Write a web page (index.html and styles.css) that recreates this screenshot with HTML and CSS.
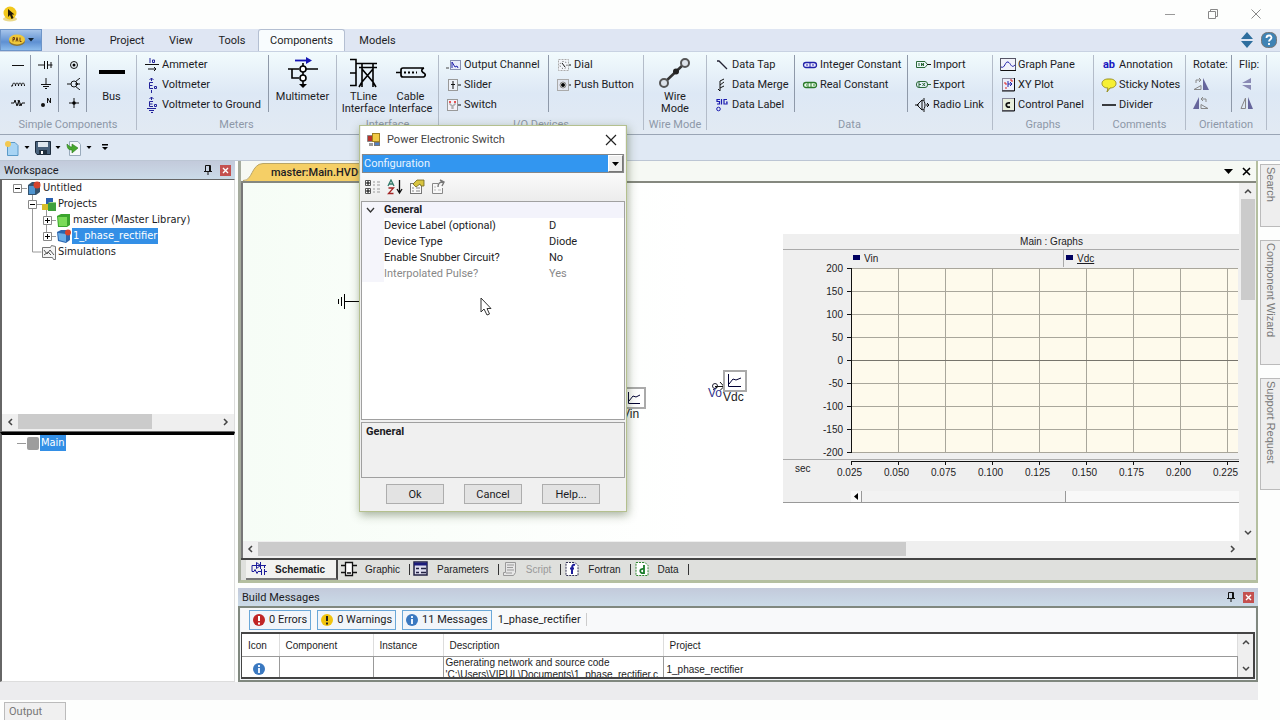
FILE: index.html
```html
<!DOCTYPE html>
<html lang="en">

	<head>
		<meta charset="UTF-8">
		<title>1_phase_rectifier</title>
		<link rel="stylesheet" href="styles.css">
	</head>

	<body>
		<header class="titlebar">
			<svg class="app-icon" width="16" height="16" viewBox="0 0 16 16"><ellipse cx="8" cy="13" rx="7" ry="2.5" fill="#ead98a"/><circle cx="8" cy="7" r="6.5" fill="#f2c81c"/><path d="M6 3v8l2-2 1.500 4 2-1-1.500-3.500h2.500z" fill="#221a08"/></svg>
			<div class="win-buttons">
				<button aria-label="Minimize"><svg width="12" height="12" viewBox="0 0 12 12"><path d="M1 6.500h10" stroke="#999"/></svg></button>
				<button aria-label="Restore"><svg width="12" height="12" viewBox="0 0 12 12"><path d="M1.500 3.500h7v7h-7zM3.500 3V1.500h7v7H9" fill="none" stroke="#888"/></svg></button>
				<button aria-label="Close"><svg width="12" height="12" viewBox="0 0 12 12"><path d="M1.500 1.500l9 9M10.500 1.500l-9 9" stroke="#888"/></svg></button>
			</div>
		</header>

		<nav class="tabs">
			<button class="app-menu" aria-label="Application menu"><svg width="34" height="16" viewBox="0 0 34 16"><ellipse cx="11" cy="9" rx="8" ry="5" fill="#8d7430"/><ellipse cx="11" cy="7.500" rx="8" ry="5" fill="#efc83a"/><path d="M7 9.500v-4h1.500v2H7M10 9.500l1-4 1 4M14 5.500v4h1.500" fill="none" stroke="#6b3c10"/><path d="M22 6h6l-3 3.500z" fill="#123"/></svg></button>
			<button class="tab tab-home">Home</button>
			<button class="tab tab-project">Project</button>
			<button class="tab tab-view">View</button>
			<button class="tab tab-tools">Tools</button>
			<button class="tab tab-components active">Components</button>
			<button class="tab tab-models">Models</button>
			<div class="tab-tools-right">
				<svg width="14" height="16" viewBox="0 0 14 16"><path d="M7 0l6 7H1zM7 16l6-7H1z" fill="#2e6e9e"/></svg>
				<svg width="16" height="16" viewBox="0 0 16 16"><rect x=".5" y=".5" width="15" height="15" rx="6" fill="#3f83b4" stroke="#777"/><path d="M5.500 6c0-3.500 5-3 5-.5 0 2-2.500 2-2.500 4M8 11v2" fill="none" stroke="#fff" stroke-width="1.800"/></svg>
			</div>
		</nav>

		<section class="ribbon">
			<div class="group g-simple">
				<div class="group-body">
					<div class="icon-col">
						<button aria-label="Wire"><svg width="16" height="12" viewBox="0 0 16 12"><path d="M2 6.500h12" stroke="#111"/></svg></button>
						<button aria-label="Inductor"><svg width="16" height="12" viewBox="0 0 16 12"><path d="M1 8h1.500c0-4 3-4 3 0 0-4 3-4 3 0 0-4 3-4 3 0 0-4 3-4 3 0" fill="none" stroke="#111"/></svg></button>
						<button aria-label="Resistor"><svg width="16" height="12" viewBox="0 0 16 12"><path d="M1 6h3l1-3 2 6 2-6 2 6 1-3h3M8 3l1.500 6" fill="none" stroke="#111"/></svg></button>
					</div>
					<div class="icon-col">
						<button aria-label="Capacitor"><svg width="16" height="12" viewBox="0 0 16 12"><path d="M0 6h6M9.500 6h5M6.500 2v8M9.500 2v8M13 3v6" stroke="#111"/></svg></button>
						<button aria-label="Ground"><svg width="16" height="12" viewBox="0 0 16 12"><path d="M8 0v6M3 6.500h10M5 8.500h6M7 10.500h2" stroke="#111"/></svg></button>
						<button aria-label="Node label"><svg width="16" height="12" viewBox="0 0 16 12"><circle cx="5" cy="8" r="2" fill="#111"/><path d="M9.500 6V1l3 5V1" fill="none" stroke="#111"/></svg></button>
					</div>
					<div class="icon-col">
						<button aria-label="Node"><svg width="16" height="12" viewBox="0 0 16 12"><circle cx="8" cy="6" r="3.500" fill="none" stroke="#111"/><circle cx="8" cy="6" r="1.500"/></svg></button>
						<button aria-label="Breakout"><svg width="16" height="12" viewBox="0 0 16 12"><path d="M1 6h4M9 4l5-4M9 6h5M9 8l5 4M10 5l2 1-2 1" stroke="#111" fill="none"/><circle cx="8" cy="6" r="3" fill="none" stroke="#111"/></svg></button>
						<button aria-label="Pin"><svg width="16" height="12" viewBox="0 0 16 12"><path d="M3 6h10M8 1v10" stroke="#111"/><circle cx="8" cy="6" r="1.800"/></svg></button>
					</div>
					<button class="big big-bus"><svg width="28" height="32" viewBox="0 0 28 32"><path d="M1 15h26" stroke="#000" stroke-width="4"/></svg><span>Bus</span></button>
				</div>
				<div class="group-label">Simple Components</div>
			</div>

			<div class="group g-meters">
				<div class="group-body">
					<div class="list">
						<button class="item"><svg width="16" height="16" viewBox="0 0 16 16"><path d="M1 7.500h14" stroke="#111"/><path d="M4 12h8M10 10l2 2-2 2" fill="none" stroke="#111"/><path d="M6 1v5M8.500 3h2v2.500h-2z" fill="none" stroke="#22229a"/></svg>Ammeter</button>
						<button class="item"><svg width="16" height="16" viewBox="0 0 16 16"><path d="M7.500 1v3M5.500 3l2-2 2 2M7.500 13v3" fill="none" stroke="#22229a"/><path d="M9 5.500H5.500v6H9M5.500 8.500h3M10.500 9.500h2v2h-2z" fill="none" stroke="#22229a"/></svg>Voltmeter</button>
						<button class="item"><svg width="16" height="16" viewBox="0 0 16 16"><path d="M7.500 0v3M5.500 2l2-2 2 2M9 4.500H5.500v5H9M5.500 7h3M10.500 7.500h2v2h-2z" fill="none" stroke="#22229a"/><path d="M3 11.500h9M5 13.500h5M7 15.500h2" stroke="#22229a"/></svg>Voltmeter to Ground</button>
					</div>
					<button class="big big-multi"><svg width="32" height="32" viewBox="0 0 32 32"><path d="M8 3.500h12" stroke="#1414b4" stroke-width="1.800"/><path d="M19 0l6 3.500L19 7z" fill="#1414b4"/><path d="M1 12h11M19 12h12M5 12v9h7M16 6v3M16 15v3M16 24v5" fill="none" stroke="#000" stroke-width="1.600"/><circle cx="16" cy="12" r="3" fill="#fff" stroke="#000" stroke-width="1.600"/><circle cx="16" cy="21" r="3" fill="#fff" stroke="#000" stroke-width="1.600"/><path d="M12 27h8l-4 4z"/></svg><span>Multimeter</span></button>
				</div>
				<div class="group-label">Meters</div>
			</div>

			<div class="group g-interface">
				<div class="group-body">
					<button class="big big-tline"><svg width="32" height="32" viewBox="0 0 32 32"><path d="M2 2.500h6v26H2M2 16h6M8 6.500h21M11 10.500h18M14 6v24M25 6v24M14 12l11 13M25 12L14 25M14 25l-3 5M25 25l3 5" fill="none" stroke="#000" stroke-width="1.600"/></svg><span>TLine Interface</span></button>
					<button class="big big-cable"><svg width="32" height="32" viewBox="0 0 32 32"><path d="M1 15.500h5M29 11H8q-2 0-2 2v5q0 2 2 2h21M29 11q-4 2-1 4.500 4 2 1 4.500" fill="none" stroke="#000" stroke-width="1.700"/><path d="M9 15.500h13" stroke="#000" stroke-width="2" stroke-dasharray="2 2"/></svg><span>Cable Interface</span></button>
				</div>
				<div class="group-label">Interface</div>
			</div>

			<div class="group g-io">
				<div class="group-body">
					<div class="list">
						<button class="item"><svg width="16" height="16" viewBox="0 0 16 16"><path d="M0 11h3M5.500 3v9.500h9" fill="none" stroke="#444"/><rect x="4.500" y="3.500" width="10" height="9" fill="#e8ecfa" stroke="#8890b0"/><path d="M6 11V5l3 5 2-1 1 2" fill="none" stroke="#2222aa"/></svg>Output Channel</button>
						<button class="item"><svg width="16" height="16" viewBox="0 0 16 16"><rect x="2.500" y="2.500" width="9" height="11" fill="#eef1f8" stroke="#999"/><path d="M7 4v8M5 7.500h4M12 8h3" stroke="#111"/></svg>Slider</button>
						<button class="item"><svg width="16" height="16" viewBox="0 0 16 16"><rect x="1.500" y="2.500" width="10" height="11" fill="#f4f2f8" stroke="#999"/><path d="M4 6v2h2v4M9 6v2H7v4" fill="none" stroke="#999"/><path d="M4 4v2M9 4v2" stroke="#d22" stroke-width="1.500"/><path d="M12 8h3" stroke="#111"/></svg>Switch</button>
					</div>
					<div class="list list-dial">
						<button class="item"><svg width="16" height="16" viewBox="0 0 16 16"><rect x="2.500" y="2.500" width="10" height="11" fill="#f3f5fa" stroke="#aaa" stroke-dasharray="2 1"/><circle cx="7.500" cy="8" r="3.500" fill="none" stroke="#444" stroke-dasharray="1 2"/><path d="M6 6l3 4M13 8h2" stroke="#111"/></svg>Dial</button>
						<button class="item"><svg width="16" height="16" viewBox="0 0 16 16"><rect x="1.500" y="2.500" width="11" height="11" fill="#e2e6ef" stroke="#aaa"/><circle cx="7" cy="8" r="3" fill="#fff" stroke="#888"/><circle cx="7" cy="8" r="2"/><path d="M13 8h2" stroke="#111"/></svg>Push Button</button>
					</div>
				</div>
				<div class="group-label">I/O Devices</div>
			</div>

			<div class="group g-wire">
				<div class="group-body">
					<button class="big"><svg width="32" height="32" viewBox="0 0 32 32"><path d="M6 25L26 6" stroke="#333" stroke-width="2.500"/><circle cx="5" cy="26" r="4" fill="#dde3ea" stroke="#555" stroke-width="2"/><circle cx="26" cy="6" r="4" fill="#dde3ea" stroke="#555" stroke-width="2"/><circle cx="17" cy="14.500" r="3" fill="#222"/></svg><span>Wire Mode</span></button>
				</div>
				<div class="group-label">Wire Mode</div>
			</div>

			<div class="group g-data">
				<div class="group-body">
					<div class="list">
						<button class="item"><svg width="16" height="16" viewBox="0 0 16 16"><path d="M3 4h2l8 8" fill="none" stroke="#223" stroke-width="1.300"/></svg>Data Tap</button>
						<button class="item"><svg width="16" height="16" viewBox="0 0 16 16"><path d="M10 2L6 4v10M6 8l4-3M6 11l4-2M6 14l-2-2" fill="none" stroke="#111"/></svg>Data Merge</button>
						<button class="item"><svg width="16" height="16" viewBox="0 0 16 16"><path d="M6 2.500H3v2h2.500v2.500H3M7.500 2v5.500M13 2.500h-3V7h3V5h-1" fill="none" stroke="#1c1cb0" stroke-width="1.200"/><circle cx="4.500" cy="12" r="1.800" fill="none" stroke="#1c1cb0"/></svg>Data Label</button>
					</div>
					<div class="list list-const">
						<button class="item"><svg width="16" height="16" viewBox="0 0 16 16"><rect x="1.500" y="5.500" width="13" height="5" rx="2.500" fill="#eef" stroke="#2222aa" stroke-width="1.300"/><path d="M8 6v4M4 8h2M10 8h2" stroke="#2222aa"/></svg>Integer Constant</button>
						<button class="item"><svg width="16" height="16" viewBox="0 0 16 16"><rect x="1.500" y="5.500" width="13" height="5" rx="2.500" fill="#efe" stroke="#2a7a2a" stroke-width="1.300"/><path d="M6 6v4M9 6v4M4 8h1M11 8h2" stroke="#2a7a2a"/></svg>Real Constant</button>
					</div>
					<div class="list list-import">
						<button class="item"><svg width="16" height="16" viewBox="0 0 16 16"><path d="M1.500 4.500H10l2.500 3-2.500 3H1.500zM4 6v3M6.500 9V6l2 3V6" fill="none" stroke="#2c6a38"/><path d="M12 7.500h4" stroke="#111"/></svg>Import</button>
						<button class="item"><svg width="16" height="16" viewBox="0 0 16 16"><rect x="1.500" y="4.500" width="11" height="6" rx="2.500" fill="none" stroke="#2c6a38"/><path d="M4 5v5M4 7.500h2M7.500 6l2.500 3M10 6L7.500 9M13 7.500h3" stroke="#2c6a38"/></svg>Export</button>
						<button class="item"><svg width="16" height="16" viewBox="0 0 16 16"><path d="M7 3L2 8l5 5zM7 3c4 0 4 10 0 10M0 8h4M11 8h3M12 6l2 2-2 2M9 1v3M9 12v3" fill="none" stroke="#111"/></svg>Radio Link</button>
					</div>
				</div>
				<div class="group-label">Data</div>
			</div>

			<div class="group g-graphs">
				<div class="group-body">
					<div class="list">
						<button class="item"><svg width="16" height="16" viewBox="0 0 16 16"><rect x=".5" y="1.500" width="15" height="12" fill="#f1f2fa" stroke="#556"/><path d="M1 10c4 2 4-6 7-5s3 7 7 3" fill="none" stroke="#2222aa"/><path d="M1 13.500h15" stroke="#111"/></svg>Graph Pane</button>
						<button class="item"><svg width="16" height="16" viewBox="0 0 16 16"><rect x="2.500" y="1.500" width="12" height="12" fill="#eceefa" stroke="#889"/><path d="M14.500 1v13H2" fill="none" stroke="#111"/><path d="M8 4v6M8 7h4M10 5l2 2-2 2" stroke="#2222aa" fill="none"/><path d="M4 6h2v2M10 3h2v2M6 10v2" fill="none" stroke="#d22"/></svg>XY Plot</button>
						<button class="item"><svg width="16" height="16" viewBox="0 0 16 16"><rect x="2.500" y="1.500" width="12" height="12" fill="#e8efdc" stroke="#889"/><path d="M14.500 1v13H2" fill="none" stroke="#111"/><path d="M10 6c-5-1-5 5 0 4" fill="none" stroke="#111" stroke-width="1.800"/></svg>Control Panel</button>
					</div>
				</div>
				<div class="group-label">Graphs</div>
			</div>

			<div class="group g-comments">
				<div class="group-body">
					<div class="list">
						<button class="item"><b class="ab">ab</b>Annotation</button>
						<button class="item"><svg width="16" height="16" viewBox="0 0 16 16"><path d="M7 11C-1 11-1 2 7 2h2c8 0 8 9 0 9l-3 4z" fill="#f6f032" stroke="#998f22"/></svg>Sticky Notes</button>
						<button class="item"><svg width="16" height="16" viewBox="0 0 16 16"><path d="M1 8h14" stroke="#000" stroke-width="1.500"/></svg>Divider</button>
					</div>
				</div>
				<div class="group-label">Comments</div>
			</div>

			<div class="group g-orient">
				<div class="group-body">
					<div class="list">
						<span class="caption">Rotate:</span>
						<button class="item" aria-label="Rotate right"><svg width="16" height="14" viewBox="0 0 16 14"><path d="M10 1v12h6z" fill="#66669c"/><path d="M8 12.500H1l7-4zM3 6V3h5M6 1l2 2-2 2" fill="none" stroke="#888"/></svg></button>
						<button class="item" aria-label="Rotate left"><svg width="16" height="14" viewBox="0 0 16 14"><path d="M6 1v12H0z" fill="#66669c"/><path d="M8 12.500h7l-7-4zM13 6V3H8M10 1L8 3l2 2" fill="none" stroke="#888"/></svg></button>
					</div>
					<div class="list list-flip">
						<span class="caption">Flip:</span>
						<button class="item" aria-label="Flip vertical"><svg width="16" height="14" viewBox="0 0 16 14"><path d="M3 6h9V1zM3 8h9v5z" fill="#8a8ab4"/></svg></button>
						<button class="item" aria-label="Flip horizontal"><svg width="16" height="14" viewBox="0 0 16 14"><path d="M6.500 2v10.500H2z" fill="none" stroke="#888"/><path d="M9 1v12h5z" fill="#66669c"/></svg></button>
					</div>
				</div>
				<div class="group-label">Orientation</div>
			</div>
		</section>

		<div class="quickbar">
			<button aria-label="New"><svg width="16" height="16" viewBox="0 0 16 16"><path d="M3.500 2.500H11l3 3v10H3.500z" fill="#a8d4f4" stroke="#5a9ac8"/><circle cx="4" cy="4" r="3" fill="#f3c850"/></svg></button>
			<svg class="caret" width="6" height="4" viewBox="0 0 6 4"><path d="M.5 0h5L3 3z"/></svg>
			<button aria-label="Save"><svg width="16" height="16" viewBox="0 0 16 16"><path d="M.5 1.500h15v13H2l-1.500-2z" fill="#48627c" stroke="#1d2c3c"/><path d="M3 2h10v5H3z" fill="#dfe8f0"/><path d="M4 10h8v5H4z" fill="#20303f"/><path d="M6 11h2v3H6z" fill="#fff"/></svg></button>
			<svg class="caret" width="6" height="4" viewBox="0 0 6 4"><path d="M.5 0h5L3 3z"/></svg>
			<button aria-label="Load"><svg width="16" height="16" viewBox="0 0 16 16"><path d="M3.500 1.500H12l2.500 3v11h-11z" fill="#f4f7fa" stroke="#9ab"/><path d="M1 4c0 5 2 6 5 6v3l6-5-6-4v3C4 7 3 6 1 4z" fill="#47a82e" stroke="#2b7a1c" stroke-width=".6"/></svg></button>
			<svg class="caret" width="6" height="4" viewBox="0 0 6 4"><path d="M.5 0h5L3 3z"/></svg>
			<svg class="more" width="6" height="7" viewBox="0 0 6 7"><path d="M0 0h6v1.500H0zM0 3h6L3 6z"/></svg>
		</div>

		<main class="work">
			<aside class="left">
				<div class="pane-title"><span>Workspace</span>
					<svg class="pin" width="8" height="10" viewBox="0 0 8 10"><path d="M1.500 6V.5h5V6M0 6.500h8M4 7v3M5.500 1v5" fill="none" stroke="#111"/></svg>
					<button class="red-x" aria-label="Close Workspace"><svg width="7" height="7" viewBox="0 0 7 7"><path d="M1 1l5 5M6 1L1 6" stroke="#fff" stroke-width="1.400"/></svg></button>
				</div>
				<div class="tree">
					<ul>
						<li class="lv0"><svg class="pm" width="9" height="9" viewBox="0 0 9 9"><path d="M.5.5h8v8h-8z" fill="#fff" stroke="#888"/><path d="M2 4.500h5" stroke="#000"/></svg><svg width="14" height="15" viewBox="0 0 14 15"><path d="M1 4l4-3h8v10l-4 3H1z" fill="#35536e"/><path d="M2 5h6v8H2z" fill="#4f94cf"/><circle cx="10" cy="4" r="3.500" fill="#d3432d"/></svg><span>Untitled</span></li>
						<li class="lv1"><svg class="pm" width="9" height="9" viewBox="0 0 9 9"><path d="M.5.5h8v8h-8z" fill="#fff" stroke="#888"/><path d="M2 4.500h5" stroke="#000"/></svg><svg width="14" height="15" viewBox="0 0 14 15"><path d="M4 1h7v6H4z" fill="#2a5fae"/><path d="M0 7h6v6H0z" fill="#d6be2b"/><path d="M6 6h8v8H6z" fill="#3fa03c"/><path d="M6 6l2-1h6v1z" fill="#9ad08a"/></svg><span>Projects</span></li>
						<li class="lv2"><svg class="pm" width="9" height="9" viewBox="0 0 9 9"><path d="M.5.5h8v8h-8z" fill="#fff" stroke="#888"/><path d="M2 4.500h5M4.500 2v5" stroke="#000"/></svg><svg width="14" height="15" viewBox="0 0 14 15"><path d="M0 3l4-2h9v11l-3 2H1z" fill="#3ba52d"/><path d="M1 4h9v9H2z" fill="#7bdb58"/></svg><span>master (Master Library)</span></li>
						<li class="lv2"><svg class="pm" width="9" height="9" viewBox="0 0 9 9"><path d="M.5.5h8v8h-8z" fill="#fff" stroke="#888"/><path d="M2 4.500h5M4.500 2v5" stroke="#000"/></svg><svg width="14" height="15" viewBox="0 0 14 15"><path d="M0 3l4-2h9v10l-4 3-8-2z" fill="#2a66b0"/><path d="M1 4l8 1v8l-7-2z" fill="#6aaee8"/><circle cx="11" cy="3.500" r="3" fill="#d3432d"/></svg><span class="sel">1_phase_rectifier</span></li>
						<li class="lv1 leaf"><svg width="14" height="15" viewBox="0 0 14 15"><path d="M.5 2.500h8l1-2 4 1v13h-2l-1-2h-10z" fill="#f4f4f4" stroke="#777"/><path d="M2 5l3 4 3-4 4 5M2 10l4-3 3 3" fill="none" stroke="#555"/></svg><span>Simulations</span></li>
					</ul>
					<svg class="tree-lines" width="60" height="80" viewBox="0 0 60 80"><path d="M22 8.500h5M32.500 14v58h9M37 24.500h5M46.500 30v26M51 40.500h5M51 56.500h5" fill="none" stroke="#999"/></svg>
					<div class="hscroll">
						<svg width="7" height="8" viewBox="0 0 7 8"><path d="M5 1L2 4l3 3" fill="none" stroke="#444" stroke-width="1.500"/></svg>
						<div class="track"><div class="thumb thumb-tree"></div></div>
						<svg width="7" height="8" viewBox="0 0 7 8"><path d="M2 1l3 3-3 3" fill="none" stroke="#444" stroke-width="1.500"/></svg>
					</div>
				</div>
				<div class="tree tree-main">
					<ul><li class="lv0"><i class="dash"></i><i class="grey-box"></i><span class="sel">Main</span></li></ul>
				</div>
			</aside>

			<div class="center">
				<section class="doc">
					<div class="doc-tabs">
						<svg class="tab-edge" width="20" height="18" viewBox="0 0 20 18"><path d="M0 18C10 18 8 1 20 .5V18z" fill="#f5cf66"/><path d="M0 17.500C10 18 8 1 20 .5" fill="none" stroke="#b9a566"/></svg>
						<button class="doc-tab">master:Main.HVDC</button>
						<div class="doc-actions">
							<svg width="9" height="5" viewBox="0 0 9 5"><path d="M0 0h9L4.500 5z"/></svg>
							<svg width="9" height="9" viewBox="0 0 9 9"><path d="M1 1l7 7M8 1L1 8" stroke="#000" stroke-width="1.600"/></svg>
						</div>
					</div>
					<div class="view">
						<div class="canvas">
							<svg class="node gnd" width="24" height="18" viewBox="0 0 24 18"><path d="M7 9.500h17M7.500 2v15M4.500 5v9M1.500 7v5" stroke="#000"/></svg>
							<div class="node vin">
								<svg width="24" height="22" viewBox="0 0 24 22"><rect x="1" y="1" width="22" height="20" fill="#fff" stroke="#aaa" stroke-width="2"/><path d="M6.500 5v11.500H18M7 14l4-5 3 1 4-2" fill="none" stroke="#003"/></svg>
								<span>Vin</span>
							</div>
							<svg class="node arrow" width="15" height="12" viewBox="0 0 15 12"><circle cx="5" cy="6" r="2.500" fill="none" stroke="#223"/><path d="M3 10l4-3M5 6.500h9M10 2l4 4.500-4 4" fill="none" stroke="#111"/></svg>
							<span class="node vo">Vo</span>
							<div class="node vdc">
								<svg width="24" height="22" viewBox="0 0 24 22"><rect x="1" y="1" width="22" height="20" fill="#fff" stroke="#aaa" stroke-width="2"/><path d="M5.500 4v12.500H18M6 14l4-5 3 1 5-2" fill="none" stroke="#003"/></svg>
								<span>Vdc</span>
							</div>

							<div class="node graph">
								<div class="graph-title">Main : Graphs</div>
								<div class="graph-legend"><span><i></i>Vin</span><span><i></i><u>Vdc</u></span></div>
								<div class="graph-plot">
									<div class="y-axis"><span>200</span><span>150</span><span>100</span><span>50</span><span>0</span><span>-50</span><span>-100</span><span>-150</span><span>-200</span></div>
									<svg width="391" height="188" viewBox="0 0 391 188">
										<path d="M4 1h387v184H4z" fill="#fefaec"/>
										<path d="M51.500 1v184M98.500 1v184M145.500 1v184M192.500 1v184M239.500 1v184M286.500 1v184M333.500 1v184M380.500 1v184M4 1.500h387M4 24.500h387M4 47.500h387M4 70.500h387M4 116.500h387M4 139.500h387M4 162.500h387M4 185.500h387" stroke="#a9a69b"/>
										<path d="M4 93.500h387" stroke="#77746c"/>
										<path d="M4.500 1v185M0 1.500h4M0 24.500h4M0 47.500h4M0 70.500h4M0 93.500h4M0 116.500h4M0 139.500h4M0 162.500h4M0 185.500h4" stroke="#111"/>
									</svg>
								</div>
								<div class="x-axis">
									<span class="unit">sec</span>
									<div class="x-labels"><span>0.025</span><span>0.050</span><span>0.075</span><span>0.100</span><span>0.125</span><span>0.150</span><span>0.175</span><span>0.200</span><span>0.225</span></div>
								</div>
								<div class="graph-scroll"><svg width="10" height="9" viewBox="0 0 10 9"><path d="M7 1v7L3 4.500z"/></svg><div class="graph-thumb"></div></div>
							</div>
						</div>
						<div class="vscroll">
							<svg width="8" height="7" viewBox="0 0 8 7"><path d="M1 5l3-3 3 3" fill="none" stroke="#444" stroke-width="1.500"/></svg>
							<div class="track"><div class="thumb thumb-view"></div></div>
							<svg width="8" height="7" viewBox="0 0 8 7"><path d="M1 2l3 3 3-3" fill="none" stroke="#444" stroke-width="1.500"/></svg>
						</div>
					</div>
					<div class="hscroll hscroll-doc">
						<svg width="7" height="8" viewBox="0 0 7 8"><path d="M5 1L2 4l3 3" fill="none" stroke="#444" stroke-width="1.500"/></svg>
						<div class="track"><div class="thumb thumb-doc"></div></div>
						<svg width="7" height="8" viewBox="0 0 7 8"><path d="M2 1l3 3-3 3" fill="none" stroke="#444" stroke-width="1.500"/></svg>
					</div>
					<div class="sheet-tabs">
						<button class="sheet sheet-on"><svg width="16" height="16" viewBox="0 0 16 16"><path d="M4 4.500H1v6h2l1-2 2 4 1-2h3M4 4.500h11M5.500 1.500v6l4-3zM9.500 1v7M10.500 8v6M13.500 8v6M13 10.500h3M13.500 4v3" fill="none" stroke="#1c1c9a"/></svg>Schematic</button>
						<button class="sheet"><svg width="16" height="16" viewBox="0 0 16 16"><path d="M4.500 1.500h7v13h-7zM0 4.500h4M0 11.500h4M12 4.500h4M12 11.500h4M6 12h4" fill="#fff" stroke="#111" stroke-width="1.300"/></svg>Graphic</button>
						<button class="sheet"><svg width="16" height="16" viewBox="0 0 16 16"><rect x="1" y="1" width="13" height="13" fill="#dde" stroke="#224" stroke-width="1.500"/><path d="M1 3h13" stroke="#1c1c7a" stroke-width="3"/><path d="M3 7.500h3M8 7.500h5M3 11.500h3M8 11.500h5" stroke="#224" stroke-width="1.500"/></svg>Parameters</button>
						<button class="sheet sheet-off" disabled><svg width="16" height="16" viewBox="0 0 16 16"><path d="M3.500 1.500h10v10l-2 3h-10v-3h2z" fill="#e6e6e6" stroke="#999"/><path d="M5 4h7M5 6.500h6M5 9h7M4 12h6" stroke="#999"/></svg>Script</button>
						<button class="sheet"><svg width="16" height="16" viewBox="0 0 16 16"><path d="M2 1.500h9l3 3v10H2z" fill="#fff" stroke="#335" stroke-dasharray="2 1"/><path d="M11 4c-3-1-3 1-3 9M6 7.500h4" fill="none" stroke="#1c1c9a" stroke-width="2"/></svg>Fortran</button>
						<button class="sheet"><svg width="16" height="16" viewBox="0 0 16 16"><path d="M2 1.500h9l3 3v10H2z" fill="#fff" stroke="#383" stroke-dasharray="2 1"/><path d="M10 4v9M10 8c-5-1-5 5 0 4" fill="none" stroke="#187a28" stroke-width="1.800"/></svg>Data</button>
					</div>
				</section>

				<section class="messages">
					<div class="pane-title"><span>Build Messages</span>
						<svg class="pin" width="8" height="10" viewBox="0 0 8 10"><path d="M1.500 6V.5h5V6M0 6.500h8M4 7v3M5.500 1v5" fill="none" stroke="#111"/></svg>
						<button class="red-x" aria-label="Close Build Messages"><svg width="7" height="7" viewBox="0 0 7 7"><path d="M1 1l5 5M6 1L1 6" stroke="#fff" stroke-width="1.400"/></svg></button>
					</div>
					<div class="msg-box">
						<div class="msg-bar">
							<button><svg width="14" height="14" viewBox="0 0 14 14"><circle cx="7" cy="7" r="6" fill="#c02626"/><path d="M7 3v5M7 9.500v2" stroke="#fff" stroke-width="2"/></svg>0 Errors</button>
							<button><svg width="14" height="14" viewBox="0 0 14 14"><circle cx="7" cy="7" r="6" fill="#f1c40f"/><path d="M7 3v5M7 9.500v2" stroke="#222" stroke-width="2"/></svg>0 Warnings</button>
							<button><svg width="14" height="14" viewBox="0 0 14 14"><circle cx="7" cy="7" r="6" fill="#3a78c0"/><path d="M7 6v5M7 3v2" stroke="#e8f2ff" stroke-width="2"/></svg>11 Messages</button>
							<span>1_phase_rectifier</span>
						</div>
						<div class="msg-table">
							<table>
								<thead><tr><th class="c-icon">Icon</th><th class="c-comp">Component</th><th class="c-inst">Instance</th><th class="c-desc">Description</th><th>Project</th></tr></thead>
								<tbody><tr><td class="c-icon"><svg width="14" height="14" viewBox="0 0 14 14"><circle cx="7" cy="7" r="6" fill="#3a78c0"/><path d="M7 6v5M7 3v2" stroke="#e8f2ff" stroke-width="2"/></svg></td><td></td><td></td><td class="desc">Generating network and source code<br>'C:\Users\VIPUL\Documents\1_phase_rectifier.c</td><td>1_phase_rectifier</td></tr></tbody>
							</table>
							<div class="vscroll vscroll-msg">
								<svg width="8" height="7" viewBox="0 0 8 7"><path d="M1 5l3-3 3 3" fill="none" stroke="#444" stroke-width="1.500"/></svg>
								<svg width="8" height="7" viewBox="0 0 8 7"><path d="M1 2l3 3 3-3" fill="none" stroke="#444" stroke-width="1.500"/></svg>
							</div>
						</div>
					</div>
				</section>
			</div>

			<aside class="right">
				<button class="side-search">Search</button>
				<button class="side-wizard">Component Wizard</button>
				<button class="side-support">Support Request</button>
			</aside>
		</main>

		<div class="status"></div>
		<footer class="bottom"><button>Output</button></footer>

		<div class="dialog" role="dialog" aria-label="Power Electronic Switch">
			<div class="dlg-title">
				<svg width="14" height="14" viewBox="0 0 14 14"><path d="M.5 2.500h5v6h-5z" fill="#b8322c" stroke="#888"/><rect x="5.500" y=".5" width="7" height="8" fill="#f1c944" stroke="#a08020"/><path d="M2 10h4v3H2z" fill="#999"/><rect x="7.500" y="9.500" width="5" height="3" fill="#4f7ec4" stroke="#777"/></svg>
				<span>Power Electronic Switch</span>
				<button aria-label="Close"><svg width="12" height="12" viewBox="0 0 12 12"><path d="M1 1l10 10M11 1L1 11" stroke="#222" stroke-width="1.200"/></svg></button>
			</div>
			<div class="combo">
				<select aria-label="Page"><option>Configuration</option></select>
				<span class="combo-arrow"><svg width="7" height="4" viewBox="0 0 7 4"><path d="M0 0h7L3.500 4z"/></svg></span>
			</div>
			<div class="dlg-tools">
				<button aria-label="Categorized"><svg width="16" height="16" viewBox="0 0 16 16"><path d="M.5 1.500h5v5h-5zM.5 9.500h5v5h-5z" fill="#fff" stroke="#555"/><path d="M1 4h4M3 2v4M1 12h4M3 10v4" stroke="#000"/><path d="M8 3h2M12 3h3M8 6h2M12 6h3M8 10h2M12 10h3M8 13h2M12 13h3" stroke="#999"/></svg></button>
				<button aria-label="Alphabetical"><svg width="16" height="16" viewBox="0 0 16 16"><path d="M1 7l3-6 3 6M2 5h4" fill="none" stroke="#337a6a" stroke-width="1.300"/><path d="M1.500 9h5l-5 5.500h5" fill="none" stroke="#a32626" stroke-width="1.300"/><path d="M12.500 1v12M10 10l2.500 4 2.500-4" fill="none" stroke="#111" stroke-width="1.300"/></svg></button>
				<button aria-label="Properties"><svg width="16" height="16" viewBox="0 0 16 16"><rect x="1.500" y="4.500" width="11" height="10" fill="#fafafa" stroke="#777"/><path d="M3 9h2M7 9h4M3 12h2M7 12h4" stroke="#888"/><path d="M4 5l4-4h7v6h-3l-1-2-4 3z" fill="#d8c440" stroke="#6e6420" stroke-width=".8"/></svg></button>
				<button aria-label="Property pages"><svg width="16" height="16" viewBox="0 0 16 16"><path d="M7 4.500H1.500v10h10V9" fill="#f8f8f8" stroke="#888"/><path d="M3 8h2M3 11h2M7 11h3" stroke="#bbb"/><path d="M7 8c0-3 1-5 5-5M9 1l4 2-2 4" fill="none" stroke="#777" stroke-width="1.400"/></svg></button>
			</div>
			<div class="props">
				<table>
					<tr class="cat"><th class="gut"><svg width="9" height="6" viewBox="0 0 9 6"><path d="M1 1l3.500 4L8 1" fill="none" stroke="#333" stroke-width="1.300"/></svg></th><th colspan="2">General</th></tr>
					<tr><td class="gut"></td><td class="name">Device Label (optional)</td><td>D</td></tr>
					<tr><td class="gut"></td><td class="name">Device Type</td><td>Diode</td></tr>
					<tr><td class="gut"></td><td class="name">Enable Snubber Circuit?</td><td>No</td></tr>
					<tr class="dim"><td class="gut"></td><td class="name">Interpolated Pulse?</td><td>Yes</td></tr>
				</table>
			</div>
			<div class="dlg-help">General</div>
			<div class="dlg-buttons"><button>Ok</button><button>Cancel</button><button>Help...</button></div>
		</div>
		<svg class="cursor" width="12" height="19" viewBox="0 0 12 19"><path d="M1 1v14l3-3 3 6 2.500-1L7 11.500h4z" fill="#fff" stroke="#333"/></svg>
	</body>

</html>
```
FILE: styles.css
```css
* {
	box-sizing: border-box;
}

html,
body,
ul,
li {
	margin: 0;
	padding: 0;
}

body {
	position: relative;
	display: flex;
	flex-direction: column;
	height: 100vh;
	overflow: hidden;
	background-color: #fdfefd;
	color: #1c1c24;
	font-family: Roboto, "Open Sans", sans-serif;
	font-size: 11px;
}

button {
	margin: 0;
	padding: 0;
	border: 0;
	background: none;
	color: inherit;
	font: inherit;
}

svg {
	flex: none;
	display: block;
}

/* title bar */
.titlebar {
	display: flex;
	align-items: center;
	justify-content: space-between;
	height: 29px;
	padding: 0 18px 2px 2px;
}

.win-buttons {
	display: flex;
	gap: 31px;
}

/* ribbon tabs */
.tabs {
	display: flex;
	height: 23px;
	background-color: #dfe6f3;
	border-bottom: 1px solid #c8d2e2;
}

.app-menu {
	width: 42px;
	border: 1px solid #6d94c8;
	background: linear-gradient(#a6c4ea, #5e90d2 60%, #8cbcec);
	padding-left: 5px;
}

.tab {
	border: 1px solid transparent;
	border-bottom: 0;
}

.tab-home {
	width: 56px;
}

.tab-project {
	width: 58px;
}

.tab-view {
	width: 50px;
}

.tab-tools {
	width: 52px;
}

.tab-components {
	width: 87px;
}

.tab-models {
	width: 65px;
}

.tab.active {
	background-color: #f8fcfe;
	border-color: #b4bfd2;
	border-radius: 3px 3px 0 0;
}

.tab-tools-right {
	display: flex;
	align-items: center;
	gap: 7px;
	margin-left: auto;
	padding-right: 3px;
}

/* ribbon */
.ribbon {
	display: flex;
	height: 83px;
	padding-top: 3px;
	background: linear-gradient(#f2fbfd, #dde8f5 50%, #e2eaf3);
	border-bottom: 1px solid #9aa5b5;
}

.group {
	display: flex;
	flex-direction: column;
	border-right: 1px solid #b3bcc9;
	margin-bottom: 4px;
}

.g-simple {
	width: 137px;
}

.g-meters {
	width: 200px;
}

.g-interface {
	width: 102px;
}

.g-io {
	width: 205px;
}

.g-wire {
	width: 63px;
}

.g-data {
	width: 286px;
}

.g-graphs {
	width: 101px;
}

.g-comments {
	width: 92px;
}

.g-orient {
	width: 81px;
}

.group-body {
	display: flex;
	flex: none;
	height: 61px;
}

.group-label {
	line-height: 18px;
	text-align: center;
	color: #8d98a8;
}

.icon-col {
	display: flex;
	flex-direction: column;
	width: 28px;
	padding-left: 3px;
	border-right: 1px solid #8e99a9;
	margin-bottom: 4px;
}

.icon-col:first-child {
	margin-left: 3px;
}

.icon-col button {
	display: flex;
	align-items: center;
	justify-content: center;
	height: 20px;
}

.list {
	display: flex;
	flex-direction: column;
	padding-left: 7px;
	margin-bottom: 4px;
}

.list + .list,
.list + .big {
	border-left: 1px solid #8e99a9;
	margin-left: auto;
	margin-bottom: 4px;
}

.item,
.caption {
	display: flex;
	align-items: center;
	gap: 2px;
	height: 20px;
	line-height: 20px;
	white-space: nowrap;
}

.big {
	display: flex;
	flex-direction: column;
	align-items: center;
	gap: 2px;
	flex: 1;
	line-height: 12px;
	padding-top: 2px;
}

.list + .big {
	flex: none;
	width: 68px;
}

.g-interface .big {
	flex: none;
	width: 47px;
}

.g-interface .group-body {
	padding-left: 3px;
}

.g-wire .big {
	padding: 2px 12px 0;
}

.g-io .list + .list {
	width: 95px;
}

.g-data .list-const {
	width: 113px;
}

.g-data .list-import {
	width: 85px;
	margin-left: 0;
}

.g-orient .list-flip {
	width: 35px;
}

.ab {
	width: 16px;
	color: #1818c0;
}

/* quick access */
.quickbar {
	display: flex;
	align-items: center;
	height: 26px;
	padding-left: 4px;
	gap: 4px;
	background-color: #e0e9f4;
	border-bottom: 1px solid #bcc6d4;
}

.quickbar .caret {
	margin-right: 1px;
}

.quickbar .more {
	margin-left: 5px;
}

/* work area */
.work {
	flex: 1;
	display: flex;
	min-height: 0;
}

.left {
	width: 235px;
	display: flex;
	flex-direction: column;
	margin-right: 3px;
}

.pane-title {
	display: flex;
	align-items: center;
	height: 18px;
	padding: 0 4px;
	background: linear-gradient(#c3cadb, #cbdbe8);
}

.pane-title span {
	flex: 1;
}

.pane-title .pin {
	margin-right: 8px;
}

.red-x {
	display: flex;
	align-items: center;
	justify-content: center;
	width: 11px;
	height: 11px;
	background-color: #c4504f;
}

.tree {
	position: relative;
	height: 253px;
	background-color: #fff;
	border: 1px solid #666;
	border-right-color: #ddd;
	border-left-width: 2px;
	font-family: "DejaVu Sans Condensed", "DejaVu Sans", sans-serif;
	font-size: 11px;
	display: flex;
	flex-direction: column;
	justify-content: space-between;
}

.tree li {
	display: flex;
	align-items: center;
	gap: 1px;
	height: 16px;
	line-height: 16px;
	white-space: nowrap;
	list-style: none;
}

.tree li > svg:not(.pm) {
	position: relative;
	z-index: 1;
}

.pm {
	margin-right: 4px;
	position: relative;
	z-index: 1;
}

.tree li span {
	padding: 0 1px;
}

.lv0 {
	padding-left: 11px;
}

.lv1 {
	padding-left: 26px;
}

.tree .lv2 {
	padding-left: 41px;
}

.tree .leaf {
	padding-left: 40px;
}

.tree .sel {
	background-color: #338fe6;
	color: #fff;
}

.tree-lines {
	position: absolute;
	left: -2px;
	top: 0;
}

.tree-main {
	flex: 1;
	height: auto;
	border-top: 3px solid #000;
	border-bottom-color: #ddd;
}

.dash {
	width: 9px;
	border-top: 1px solid #999;
	margin-left: 4px;
}

.grey-box {
	width: 12px;
	height: 13px;
	border-radius: 2px;
	background-color: #9d9d9d;
}

.hscroll {
	display: flex;
	align-items: center;
	gap: 4px;
	height: 17px;
	padding: 0 5px 2px;
	background-color: #efefef;
}

.track {
	flex: 1;
	height: 100%;
}

.thumb {
	height: 100%;
	background-color: #cbcbcb;
}

.thumb-tree {
	width: 67%;
}

.center {
	flex: 1;
	min-width: 0;
	display: flex;
	flex-direction: column;
	gap: 5px;
}

/* schematic document */
.doc {
	flex: 1;
	min-height: 0;
	display: flex;
	flex-direction: column;
	border: 1px solid #b4bfa0;
	border-width: 0 2px 3px 3px;
	border-left-color: #a5ab9d;
	background-color: #efefef;
}

.doc-tabs {
	display: flex;
	align-items: flex-end;
	height: 22px;
	padding-left: 2px;
	background-color: #f6f9f4;
	border-bottom: 2px solid #85887f;
}

.doc-tab {
	height: 18px;
	padding: 0 10px 0 8px;
	border-top: 1px solid #b9a566;
	background-color: #f5cf66;
	font-weight: 500;
}

.doc-actions {
	display: flex;
	align-items: center;
	gap: 9px;
	height: 20px;
	margin-left: auto;
	padding-right: 5px;
}

.view {
	flex: 1;
	min-height: 0;
	display: flex;
	border-left: 2px solid #777;
}

.canvas {
	position: relative;
	flex: 1;
	overflow: hidden;
	background: linear-gradient(90deg, #f6fdf6, #fff 45%);
	font-family: "Liberation Sans", Arial, sans-serif;
	font-size: 10px;
}

.vscroll {
	width: 17px;
	display: flex;
	flex-direction: column;
	align-items: center;
	gap: 4px;
	padding: 5px 0;
	background-color: #efefef;
}

.vscroll .track {
	width: 14px;
}

.thumb-view {
	height: 31%;
}

.hscroll-doc {
	padding: 1px 20px 2px 4px;
	border-left: 2px solid #777;
}

.thumb-doc {
	width: 67%;
}

.sheet-tabs {
	display: flex;
	height: 22px;
	padding-left: 5px;
	border-top: 2px solid #444;
	background-color: #dfe0dd;
	font-family: "Liberation Sans", Arial, sans-serif;
	font-size: 10px;
}

.sheet {
	display: flex;
	align-items: center;
	gap: 8px;
	height: 18px;
	padding-left: 3px;
	white-space: nowrap;
}

.sheet::after {
	content: "";
	width: 1px;
	height: 11px;
	margin-left: 1px;
	background-color: #333;
}

.sheet-on {
	height: 20px;
	padding: 0 11px 0 5px;
	border-right: 2px solid #444;
	border-bottom: 2px solid #777;
	background-color: #f2f2f0;
	font-weight: bold;
}

.sheet-on::after {
	display: none;
}

.sheet-off {
	color: #999;
}

/* items placed on the schematic */
.node {
	position: absolute;
}

.gnd {
	left: 94px;
	top: 109px;
}

.vin {
	left: 379px;
	top: 204px;
	line-height: 10px;
	font-size: 12px;
}

.vdc {
	left: 480px;
	top: 187px;
	line-height: 10px;
	font-size: 12px;
}

.arrow {
	left: 467px;
	top: 197px;
}

.vo {
	left: 465px;
	top: 203px;
	color: #33338c;
	font-size: 12px;
}

.graph {
	left: 540px;
	top: 51px;
	right: 0;
	background-color: #efefef;
	border-bottom: 1px solid #999;
	overflow: hidden;
}

.graph-title {
	height: 16px;
	line-height: 16px;
	padding-left: 81px;
	text-align: center;
	border-bottom: 1px solid #aaa;
}

.graph-legend {
	display: flex;
	height: 17px;
	line-height: 18px;
	padding-left: 70px;
}

.graph-legend span {
	flex: 0 0 210px;
}

.graph-legend span + span {
	border-left: 1px solid #aaa;
	padding-left: 2px;
}

.graph-legend i {
	display: inline-block;
	width: 7px;
	height: 5px;
	margin-right: 4px;
	vertical-align: 2px;
	background-color: #000060;
}

.graph-plot {
	display: flex;
	height: 193px;
	border-bottom: 1px solid #aaa;
}

.y-axis {
	display: flex;
	flex-direction: column;
	flex: 0 0 64px;
	padding-right: 4px;
	margin-top: -10px;
	text-align: right;
	line-height: 23px;
}

.y-axis span {
	flex: none;
}

.x-axis {
	display: flex;
	height: 31px;
	line-height: 18px;
}

.unit {
	flex: 0 0 52px;
	padding-left: 12px;
}

.x-labels {
	display: flex;
	flex: none;
	margin-left: -9px;
}

.x-labels span {
	position: relative;
	width: 47px;
	padding-top: 4px;
	text-align: center;
}

.x-labels span::before {
	content: "";
	position: absolute;
	left: 25px;
	top: 1px;
	width: 47px;
	height: 3px;
	border-top: 1px solid #111;
	border-left: 1px solid #111;
}

.graph-scroll {
	display: flex;
	align-items: center;
	height: 11px;
	margin-left: 68px;
	background-color: #f8f8f8;
}

.graph-thumb {
	width: 205px;
	height: 11px;
	background-color: #f2f2f2;
	border: 1px solid #999;
	border-width: 0 1px;
}

/* build messages */
.messages {
	height: 94px;
}

.msg-box {
	height: 76px;
	border: 2px solid #80887f;
	padding: 0 1px;
	background-color: #f3f6f9;
}

.msg-bar {
	display: flex;
	align-items: center;
	gap: 6px;
	height: 24px;
	padding: 0 0 1px 8px;
	background-color: #f8f9fa;
}

.msg-bar button {
	display: flex;
	align-items: center;
	gap: 3px;
	height: 20px;
	padding: 0 3px 0 2px;
	border: 1px solid #6ba8d8;
	background-color: #f1f5fa;
}

.msg-bar span {
	padding-right: 5px;
	border-right: 1px solid #ccc;
}

.msg-table {
	display: flex;
	height: 47px;
	overflow: hidden;
	border: 2px solid #444;
	border-width: 2px 2px 2px 1px;
	background-color: #fff;
	font-family: "Liberation Sans", Arial, sans-serif;
	font-size: 10px;
}

.msg-table table {
	flex: 1;
	width: 100%;
	border-collapse: collapse;
	table-layout: fixed;
}

.msg-table th {
	height: 22px;
	padding: 2px 6px 0;
	font-weight: normal;
	text-align: left;
	border-right: 1px solid #ddd;
	border-bottom: 1px solid #999;
}

.msg-table td {
	height: 26px;
	padding: 0 3px;
	border-right: 1px solid #999;
	overflow: hidden;
	white-space: nowrap;
}

.msg-table .desc {
	line-height: 12px;
	padding: 0 2px;
}

.msg-table td.c-icon {
	padding-left: 10px;
}

.c-icon {
	width: 37px;
}

.c-comp {
	width: 94px;
}

.c-inst {
	width: 70px;
}

.c-desc {
	width: 220px;
}

.vscroll-msg {
	flex: none;
	width: 15px;
	height: 43px;
	padding: 5px 0;
	justify-content: space-between;
}

/* side tabs */
.right {
	width: 22px;
	padding: 3px 0 0 2px;
	font-family: "Liberation Sans", Arial, sans-serif;
	font-size: 11px;
}

.right button {
	display: block;
	width: 20px;
	padding: 2px 0 0 0;
	margin-bottom: 13px;
	border: 1px solid #bbb;
	border-right: 0;
	background-color: #eee;
	color: #777;
	writing-mode: vertical-rl;
	text-align: left;
}

.right .side-search {
	height: 63px;
}

.right .side-wizard {
	height: 125px;
}

.right .side-support {
	height: 112px;
}

.status {
	height: 18px;
	margin-right: 22px;
	background-color: #ececee;
}

.bottom {
	height: 20px;
	padding: 2px 4px 0;
}

.bottom button {
	width: 62px;
	height: 18px;
	padding-left: 4px;
	border: 1px solid #bbb;
	border-bottom: 0;
	background-color: #f0f0f0;
	color: #777;
	text-align: left;
}

/* component dialog */
.dialog {
	position: absolute;
	left: 359px;
	top: 125px;
	width: 268px;
	padding: 0 1px 7px;
	border: 1px solid #b4c08e;
	background-color: #f0f0f0;
	box-shadow: 1px 3px 9px rgba(60, 80, 40, .45);
}

.dlg-title {
	display: flex;
	align-items: center;
	gap: 6px;
	height: 28px;
	padding: 0 8px 1px 6px;
	background-color: #fff;
	color: #444;
}

.dlg-title span {
	flex: 1;
}

.combo {
	position: relative;
	margin: 0 1px;
}

.combo select {
	display: block;
	width: 100%;
	height: 19px;
	padding: 0 0 0 1px;
	appearance: none;
	border: 1px solid #888;
	border-radius: 0;
	background-color: #3296f0;
	color: #e8f4ff;
	font: inherit;
}

.combo-arrow {
	position: absolute;
	top: 1px;
	right: 1px;
	width: 15px;
	height: 17px;
	display: flex;
	align-items: center;
	justify-content: center;
	background-color: #efefef;
	border: 1px solid #fff;
	border-right-color: #777;
	border-bottom-color: #777;
	pointer-events: none;
}

.dlg-tools {
	display: flex;
	align-items: center;
	gap: 6px;
	height: 28px;
	padding-left: 4px;
	background: linear-gradient(#fafafa, #ececec);
}

.props {
	height: 219px;
	border: 1px solid #a0a0a0;
	background-color: #fff;
}

.props table {
	width: 100%;
	border-spacing: 0;
	line-height: 16px;
}

.props td,
.props th {
	padding: 0;
	text-align: left;
}

.props .gut {
	width: 22px;
	padding-left: 4px;
	background-color: #f5f5fb;
}

.props .name {
	width: 165px;
}

.cat {
	background-color: #f3f3fb;
}

.dim {
	color: #888;
}

.dlg-help {
	height: 56px;
	margin-top: 2px;
	padding: 1px 4px;
	border: 1px solid #a0a0a0;
	font-weight: bold;
	line-height: 16px;
}

.dlg-buttons {
	display: flex;
	justify-content: center;
	gap: 20px;
	padding-top: 6px;
}

.dlg-buttons button {
	width: 58px;
	height: 20px;
	border: 1px solid #adadad;
	background-color: #e3e3e3;
}

.cursor {
	position: absolute;
	left: 480px;
	top: 297px;
}
```
